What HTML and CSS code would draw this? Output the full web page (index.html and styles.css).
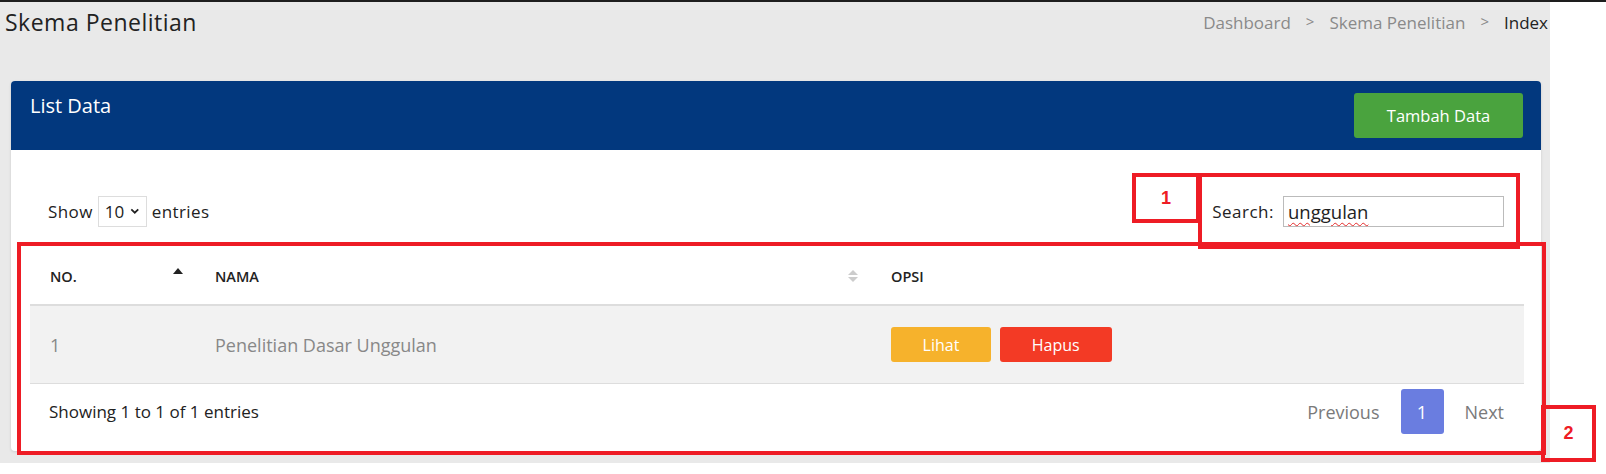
FILE: index.html
```html
<!DOCTYPE html>
<html lang="id">
<head>
    <meta charset="UTF-8">
    <title>Skema Penelitian</title>
    <link rel="stylesheet" href="styles.css">
</head>
<body>
    <div class="page">
        <div class="page-header">
            <h1 class="page-title">Skema Penelitian</h1>
            <div class="breadcrumb">
                <span>Dashboard</span>
                <span class="sep">&gt;</span>
                <span>Skema Penelitian</span>
                <span class="sep">&gt;</span>
                <span class="current">Index</span>
            </div>
        </div>

        <div class="card">
            <div class="card-header">
                <h2 class="card-title">List Data</h2>
                <button class="btn btn-green">Tambah Data</button>
            </div>
            <div class="card-body">
                <div class="table-tools">
                    <label class="length">
                        Show
                        <span class="select">10
                            <svg width="11" height="8" viewBox="0 0 11 8"><path d="M1.5 2 L5.5 6 L9.5 2" fill="none" stroke="#222" stroke-width="2"/></svg>
                        </span>
                        entries
                    </label>
                    <label class="search">
                        Search:
                        <span class="search-input"><span class="typo">unggulan</span></span>
                    </label>
                </div>

                <table class="data-table">
                    <thead>
                        <tr>
                            <th class="col-no">NO.<span class="sort-up"></span></th>
                            <th class="col-nama">NAMA<span class="sort-both"><i class="up"></i><i class="down"></i></span></th>
                            <th class="col-opsi">OPSI</th>
                        </tr>
                    </thead>
                    <tbody>
                        <tr>
                            <td>1</td>
                            <td class="muted">Penelitian Dasar Unggulan</td>
                            <td>
                                <button class="btn btn-sm btn-yellow">Lihat</button>
                                <button class="btn btn-sm btn-red">Hapus</button>
                            </td>
                        </tr>
                    </tbody>
                </table>

                <div class="table-footer">
                    <div class="info">Showing 1 to 1 of 1 entries</div>
                    <div class="pager">
                        <span class="pager-link">Previous</span>
                        <span class="pager-current">1</span>
                        <span class="pager-link">Next</span>
                    </div>
                </div>
            </div>
        </div>
    </div>

    <!-- annotation marks -->
    <div class="mark mark-label mark-1">1</div>
    <div class="mark mark-search"></div>
    <div class="mark mark-table"></div>
    <div class="mark mark-label mark-2">2</div>
</body>
</html>
```

FILE: styles.css
```css
body {
    margin: 0;
    padding: 0;
    background: #fff;
    font-family: 'Open Sans', 'Noto Sans', sans-serif;
    color: #222;
    border-top: 2px solid #1e1e1e;
    position: relative;
    overflow: hidden;
}
.page {
    width: 1550px;
    height: 461px;
    background: #e9e9e9;
}
.page-header {
    display: flex;
    justify-content: space-between;
    align-items: center;
    height: 40px;
    padding: 0 2px 0 5px;
}
.page-title {
    margin: 0;
    font-size: 23px;
    font-weight: 400;
    letter-spacing: 0.5px;
    color: #222;
}
.breadcrumb {
    display: flex;
    gap: 15px;
    font-size: 17px;
    color: #8a8a8a;
}
.breadcrumb .sep { font-size: 15px; }
.breadcrumb .current { color: #222; }

.card {
    margin: 39px 0 0 11px;
    width: 1530px;
    background: #fff;
    border-radius: 4px;
    box-shadow: 0 1px 3px rgba(0, 0, 0, 0.12);
    overflow: hidden;
}
.card-header {
    background: #02387e;
    height: 69px;
    display: flex;
    justify-content: space-between;
    align-items: flex-start;
    padding: 0 18px 0 19px;
}
.card-title {
    margin: 11px 0 0;
    font-size: 20px;
    font-weight: 400;
    color: #fff;
}
.btn {
    border: none;
    border-radius: 3px;
    font-family: inherit;
    color: #fff;
    cursor: pointer;
}
.btn-green {
    margin-top: 12px;
    width: 169px;
    height: 45px;
    background: #4aa33e;
    font-size: 16.5px;
}
.card-body {
    padding: 45px 17px 17px 19px;
}
.table-tools {
    display: flex;
    justify-content: space-between;
    align-items: center;
    height: 32px;
    padding: 0 20px 0 18px;
}
.length, .search {
    display: flex;
    align-items: center;
    gap: 5px;
    font-size: 17px;
}
.length { letter-spacing: 0.4px; }
.select {
    display: inline-flex;
    align-items: center;
    gap: 6px;
    height: 31px;
    padding: 0 6px;
    border: 1px solid #ddd;
    box-sizing: border-box;
    width: 49px;
    letter-spacing: 0;
}
.search { gap: 9px; letter-spacing: 0.5px; }
.search-input {
    width: 221px;
    height: 31px;
    box-sizing: border-box;
    border: 1px solid #bbb;
    padding: 0 4px;
    display: flex;
    align-items: center;
    font-size: 18.5px;
    letter-spacing: 0;
    color: #222;
}
.typo {
    text-decoration: underline wavy #e52b2b;
    text-decoration-thickness: 1px;
    text-underline-offset: 3px;
}

.data-table {
    width: 100%;
    margin-top: 21px;
    border-collapse: collapse;
}
.data-table th {
    position: relative;
    text-align: left;
    font-size: 14.5px;
    font-weight: 600;
    color: #222;
    height: 56px;
    padding: 0 20px;
    border-bottom: 2px solid #ddd;
}
.col-no { width: 125px; }
.col-nama { width: 636px; }
.sort-up {
    position: absolute;
    right: 12px;
    top: 20px;
    border: 5px solid transparent;
    border-bottom: 6px solid #222;
    border-top: 0;
}
.sort-both {
    position: absolute;
    right: 13px;
    top: 22px;
    display: flex;
    flex-direction: column;
    gap: 2px;
}
.sort-both i {
    border: 5px solid transparent;
}
.sort-both .up { border-bottom: 5px solid #ccc; border-top: 0; }
.sort-both .down { border-top: 5px solid #ccc; border-bottom: 0; }

.data-table td {
    background: #f2f2f2;
    height: 77px;
    padding: 0 20px;
    font-size: 18px;
    color: #888;
    border-bottom: 1px solid #ddd;
}
.data-table td .btn + .btn { margin-left: 4px; }
.btn-sm {
    height: 35px;
    font-size: 16px;
}
.btn-yellow { width: 100px; background: #f6b22c; }
.btn-red { width: 112px; background: #f33a25; }

.table-footer {
    display: flex;
    justify-content: space-between;
    align-items: center;
    padding: 5px 20px 0 19px;
}
.info { font-size: 17px; color: #222; }
.pager {
    display: flex;
    align-items: center;
    gap: 21px;
    font-size: 18px;
}
.pager-link { color: #7a7a7a; }
.pager-current {
    width: 43px;
    height: 45px;
    border-radius: 3px;
    background: #6a7de0;
    color: #fff;
    display: flex;
    align-items: center;
    justify-content: center;
}

.mark {
    position: absolute;
    border: 4px solid #ee1c25;
    box-sizing: border-box;
    font-family: 'Liberation Sans', sans-serif;
    color: #ee1c25;
    font-weight: 700;
}
.mark-label {
    display: flex;
    align-items: center;
    justify-content: center;
    font-size: 18px;
}
.mark-1 { left: 1132px; top: 171px; width: 68px; height: 50px; }
.mark-search { left: 1198px; top: 171px; width: 322px; height: 76px; }
.mark-table { left: 17px; top: 240px; width: 1529px; height: 213px; }
.mark-2 { left: 1541px; top: 403px; width: 55px; height: 57px; }
```
